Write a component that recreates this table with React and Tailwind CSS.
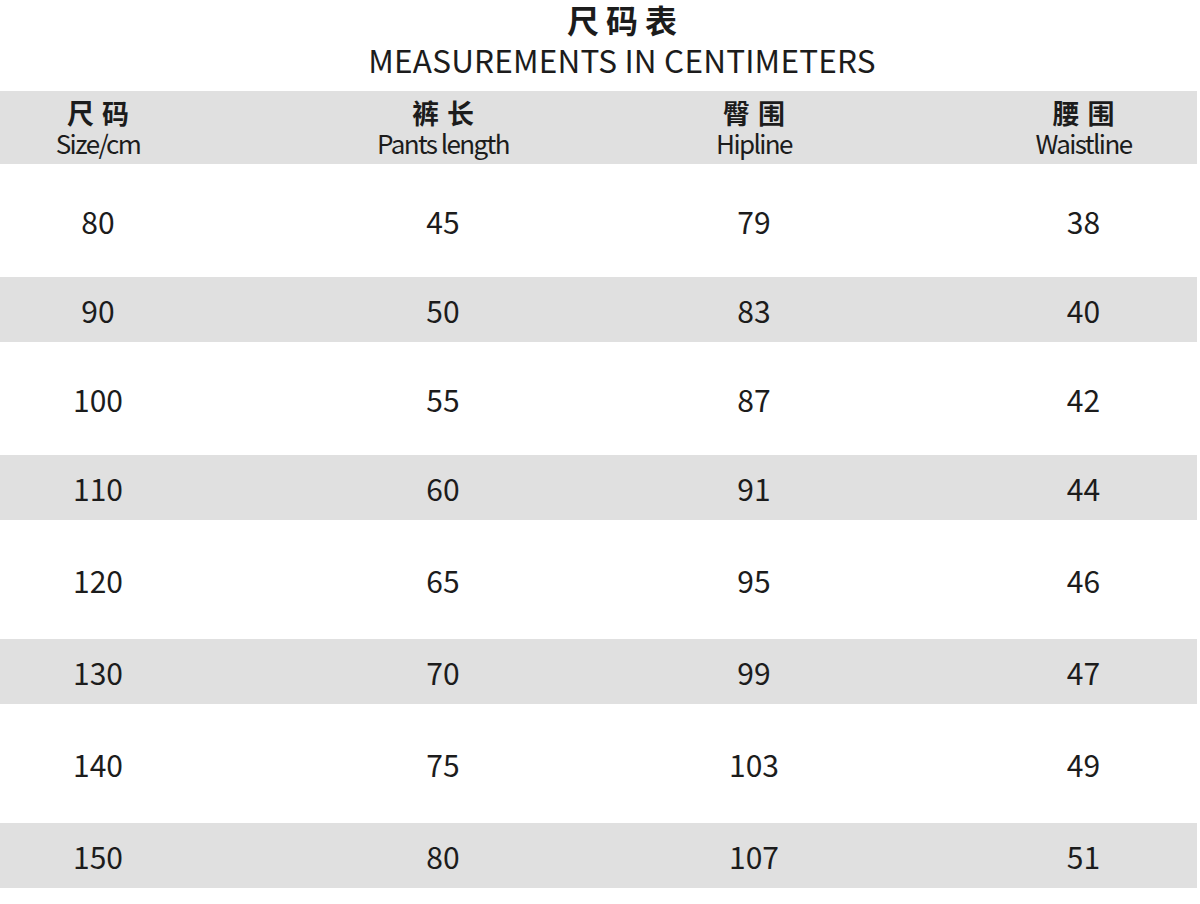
import React from "react";

const rows = [
    ["80", "45", "79", "38"],
    ["90", "50", "83", "40"],
    ["100", "55", "87", "42"],
    ["110", "60", "91", "44"],
    ["120", "65", "95", "46"],
    ["130", "70", "99", "47"],
    ["140", "75", "103", "49"],
    ["150", "80", "107", "51"],
];

// heights of each row as in the picture (white rows are taller)
const rowHeights = ["h-[113px]", "h-[65px]", "h-[113px]", "h-[65px]", "h-[119px]", "h-[65px]", "h-[119px]", "h-[65px]"];

const headers = [
    { cn: "尺码", en: "Size/cm" },
    { cn: "裤长", en: "Pants length" },
    { cn: "臀围", en: "Hipline" },
    { cn: "腰围", en: "Waistline" },
];

const colClass = ["", "", "", "pl-[152px]"];

const font = { fontFamily: '"Noto Sans CJK SC", "Noto Sans", sans-serif' };

export default function App() {
    return (
        <div className="w-[1200px] h-[904px] bg-white text-[#1c1c1c] overflow-hidden" style={font}>
            {/* Title */}
            <div className="flex flex-col items-center pl-[44px]">
                <h1 className="text-[32px] font-bold leading-[38px] tracking-[7px] pl-[7px]">尺码表</h1>
                <p className="text-[31.5px] leading-[42px] tracking-[0.2px]">MEASUREMENTS IN CENTIMETERS</p>
            </div>

            {/* Table */}
            <div className="w-[1197px] mt-[11px]">
                <div className="grid grid-cols-[196px_494px_128px_379px] h-[73px] bg-[#e0e0e0] items-center">
                    {headers.map((h, i) => (
                        <div key={h.en} className={`flex flex-col items-center ${colClass[i]}`}>
                            <span className="text-[27px] font-bold leading-[30px] tracking-[8px] pl-[8px]">{h.cn}</span>
                            <span className="text-[26px] leading-[30px] tracking-[-1.6px] whitespace-nowrap">{h.en}</span>
                        </div>
                    ))}
                </div>

                {rows.map((r, ri) => (
                    <div
                        key={r[0]}
                        className={`grid grid-cols-[196px_494px_128px_379px] items-center ${rowHeights[ri]} ${ri % 2 === 1 ? "bg-[#e0e0e0]" : ""}`}
                    >
                        {r.map((v, i) => (
                            <div key={i} className={`text-center text-[30px] leading-none ${colClass[i]}`}>
                                {v}
                            </div>
                        ))}
                    </div>
                ))}
            </div>
        </div>
    );
}
